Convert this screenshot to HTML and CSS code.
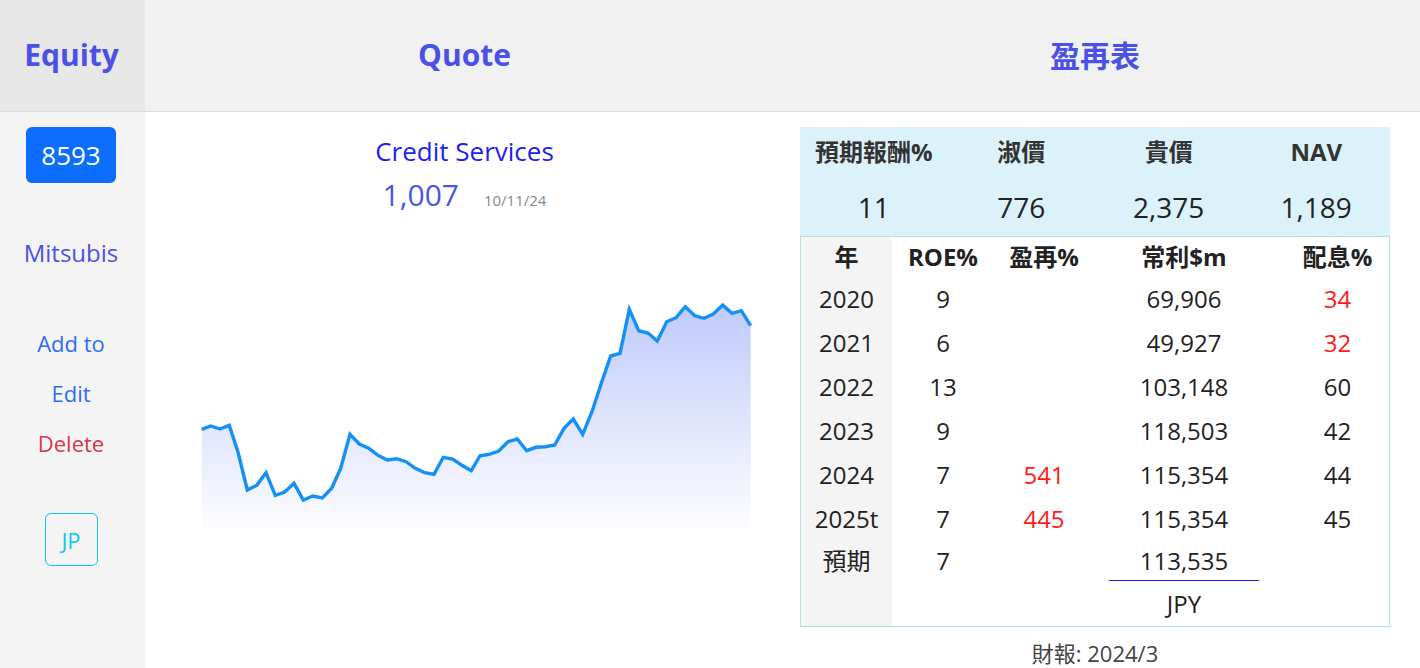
FILE: index.html
```html
<!DOCTYPE html>
<html lang="zh-Hant">
<head>
<meta charset="utf-8">
<title>Equity 8593</title>
<link rel="stylesheet" href="styles.css">
</head>
<body>
<div class="page">
  <header class="topbar">
    <div class="tab tab-equity">Equity</div>
    <div class="tab">Quote</div>
    <div class="tab">盈再表</div>
  </header>
  <main class="content">
    <aside class="sidebar">
      <div class="ticker">8593</div>
      <div class="name">Mitsubis</div>
      <div class="link link-first">Add to</div>
      <div class="link">Edit</div>
      <div class="link link-danger">Delete</div>
      <div class="market">JP</div>
    </aside>
    <section class="quote">
      <div class="company">Credit Services</div>
      <div class="priceline"><span class="price">1,007</span><span class="date">10/11/24</span></div>
      <svg class="chart" width="639" height="325" viewBox="145 215 639 325" xmlns="http://www.w3.org/2000/svg">
        <defs>
          <linearGradient id="area" gradientUnits="userSpaceOnUse" x1="0" y1="305" x2="0" y2="530">
            <stop offset="0" stop-color="#4e6ef2" stop-opacity="0.36"/>
            <stop offset="1" stop-color="#4e6ef2" stop-opacity="0.01"/>
          </linearGradient>
        </defs>
        <polygon fill="url(#area)" points="201.7,429.3 210.7,426 220,429 229.3,425.3 238.3,453.3 247.3,490 256.7,485.3 266,472.7 275.3,495.3 284.7,492 294,483.3 303.3,500 312.7,496 322.3,498 331.7,488.3 340.7,468.3 350,434.3 359.3,444 368.7,448.3 378,455.3 387.3,460 396.7,458.7 406,461.7 415.3,468.3 424.7,472.7 434,474.3 443.3,457.3 452.7,459 462,465.3 471.3,470.7 480,455.7 489.3,454.3 498.7,451 508,441.7 517.3,439 526.7,450.7 536,447.3 545.3,446.7 554.7,445 564,428.3 573.3,419 582.7,434.3 592,411.7 601.3,383.3 610.7,356 620,353.3 629.3,309.3 638.7,330.7 648,333 657.3,341 666.7,321.7 676,317.7 685.3,306.7 694.7,315.7 704,318.3 713.3,314 722.7,305 732,313.3 741.3,310.7 750.7,325.7 750.7,529 201.7,529"/>
        <polyline fill="none" stroke="#1491f7" stroke-width="3.4" points="201.7,429.3 210.7,426 220,429 229.3,425.3 238.3,453.3 247.3,490 256.7,485.3 266,472.7 275.3,495.3 284.7,492 294,483.3 303.3,500 312.7,496 322.3,498 331.7,488.3 340.7,468.3 350,434.3 359.3,444 368.7,448.3 378,455.3 387.3,460 396.7,458.7 406,461.7 415.3,468.3 424.7,472.7 434,474.3 443.3,457.3 452.7,459 462,465.3 471.3,470.7 480,455.7 489.3,454.3 498.7,451 508,441.7 517.3,439 526.7,450.7 536,447.3 545.3,446.7 554.7,445 564,428.3 573.3,419 582.7,434.3 592,411.7 601.3,383.3 610.7,356 620,353.3 629.3,309.3 638.7,330.7 648,333 657.3,341 666.7,321.7 676,317.7 685.3,306.7 694.7,315.7 704,318.3 713.3,314 722.7,305 732,313.3 741.3,310.7 750.7,325.7"/>
      </svg>
    </section>
    <section class="ratios">
      <div class="valuation">
        <div class="v-head">預期報酬%</div>
        <div class="v-head">淑價</div>
        <div class="v-head">貴價</div>
        <div class="v-head">NAV</div>
        <div class="v-val">11</div>
        <div class="v-val">776</div>
        <div class="v-val">2,375</div>
        <div class="v-val">1,189</div>
      </div>
      <div class="history">
        <div class="row row-head">
          <div class="c c-year">年</div><div class="c">ROE%</div><div class="c">盈再%</div><div class="c">常利$m</div><div class="c c-last">配息%</div>
        </div>
        <div class="row">
          <div class="c c-year">2020</div><div class="c">9</div><div class="c"></div><div class="c">69,906</div><div class="c c-last red">34</div>
        </div>
        <div class="row">
          <div class="c c-year">2021</div><div class="c">6</div><div class="c"></div><div class="c">49,927</div><div class="c c-last red">32</div>
        </div>
        <div class="row">
          <div class="c c-year">2022</div><div class="c">13</div><div class="c"></div><div class="c">103,148</div><div class="c c-last">60</div>
        </div>
        <div class="row">
          <div class="c c-year">2023</div><div class="c">9</div><div class="c"></div><div class="c">118,503</div><div class="c c-last">42</div>
        </div>
        <div class="row">
          <div class="c c-year">2024</div><div class="c">7</div><div class="c red">541</div><div class="c">115,354</div><div class="c c-last">44</div>
        </div>
        <div class="row">
          <div class="c c-year">2025t</div><div class="c">7</div><div class="c red">445</div><div class="c">115,354</div><div class="c c-last">45</div>
        </div>
        <div class="row row-forecast">
          <div class="c c-year">預期</div><div class="c">7</div><div class="c"></div><div class="c"><span class="underlined">113,535</span></div><div class="c c-last"></div>
        </div>
        <div class="row row-unit">
          <div class="c c-year"></div><div class="c"></div><div class="c"></div><div class="c">JPY</div><div class="c c-last"></div>
        </div>
      </div>
      <div class="report">財報: 2024/3</div>
    </section>
  </main>
</div>
</body>
</html>
```
FILE: styles.css
```css
* { box-sizing: border-box; }

html, body {
  margin: 0;
  padding: 0;
  background: #ffffff;
}

body {
  font-family: "Open Sans", "Noto Sans CJK TC", sans-serif;
  color: #222;
}

.page {
  min-height: 100vh;
  display: grid;
  grid-template-rows: auto 1fr;
}

.topbar {
  display: grid;
  grid-template-columns: 145px 639px 622px;
  height: 112px;
  background: #f1f1f1;
  border-bottom: 1px solid #dcdcdc;
}

.tab {
  display: flex;
  align-items: center;
  justify-content: center;
  padding-bottom: 3px;
  font-size: 30px;
  font-weight: 700;
  color: #4b50e6;
}

.tab-equity {
  background: #e8e8e8;
  padding-right: 2px;
}

.content {
  display: grid;
  grid-template-columns: 145px 639px 622px;
}

/* Sidebar */
.sidebar {
  background: #f4f4f4;
  display: flex;
  flex-direction: column;
  align-items: center;
  padding-top: 15px;
  padding-right: 3px;
}

.ticker {
  background: #0d6efd;
  color: #fff;
  font-size: 26px;
  line-height: 40px;
  padding: 8px 15px;
  border-radius: 6px;
}

.name {
  margin-top: 52px;
  font-size: 24px;
  line-height: 36px;
  color: #4f4fe6;
}

.link {
  margin-top: 16px;
  font-size: 22px;
  line-height: 34px;
  color: #2f6cf5;
}

.link-first {
  margin-top: 55px;
}

.link-danger {
  color: #dc3545;
}

.market {
  margin-top: 53px;
  width: 53px;
  height: 53px;
  display: flex;
  align-items: center;
  justify-content: center;
  border: 1px solid #0dcaf0;
  border-radius: 6px;
  color: #0dcaf0;
  font-size: 22px;
}

/* Quote */
.quote {
  text-align: center;
  padding-top: 21px;
}

.company {
  font-size: 26px;
  line-height: 36px;
  color: #1c22f0;
}

.priceline {
  margin-top: 6px;
  height: 40px;
  display: flex;
  justify-content: center;
  align-items: baseline;
  line-height: 40px;
}

.price {
  font-size: 30px;
  color: #4a57e6;
}

.date {
  font-size: 15px;
  color: #888;
  margin-left: 25px;
}

.chart {
  display: block;
}

/* Ratios */
.ratios {
  padding: 15px 16px 0 16px;
}

.valuation {
  display: grid;
  grid-template-columns: repeat(4, 1fr);
  grid-template-rows: 50px 59px;
  background: #dbf2fa;
}

.v-head {
  display: flex;
  align-items: center;
  justify-content: center;
  font-size: 24px;
  font-weight: 700;
  color: #333;
  line-height: 34px;
}

.v-val {
  display: flex;
  align-items: center;
  justify-content: center;
  font-size: 28px;
  color: #222;
}

.history {
  border: 1px solid #bddde6;
}

.row {
  display: grid;
  grid-template-columns: 91px 102px 100px 180px 115px;
  height: 44px;
}

.row-head {
  height: 40px;
  font-weight: 700;
}

.row-forecast {
  height: 40px;
}

.row-unit {
  height: 45px;
}

.c {
  display: flex;
  align-items: center;
  justify-content: center;
  font-size: 24px;
  line-height: 34px;
  color: #222;
}

.c-year {
  background: #f4f4f4;
}

.c-last {
  padding-left: 12px;
}

.red {
  color: #ff1a1a;
}

.row-forecast .c {
  align-items: flex-start;
  padding-top: 3px;
}

.underlined {
  display: block;
  width: 150px;
  height: 37px;
  border-bottom: 1px solid #1a1aee;
  text-align: center;
}

.report {
  margin-top: 10px;
  text-align: center;
  font-size: 22px;
  line-height: 33px;
  color: #444;
}
```
